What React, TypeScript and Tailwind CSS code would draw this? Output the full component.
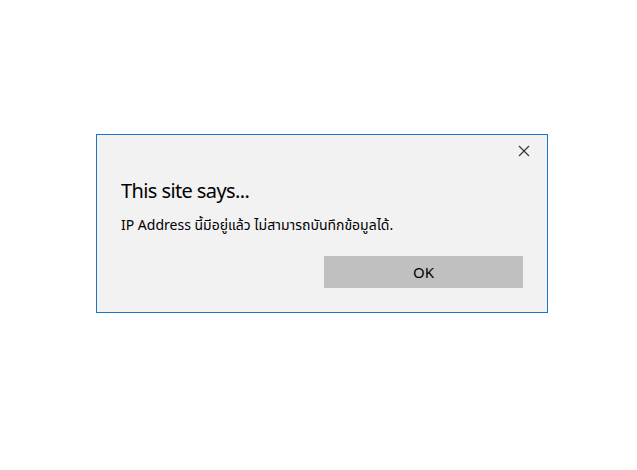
import React from "react";

export default function App() {
  return (
    <div className="w-[637px] h-[470px] bg-white pt-[134px] pl-[96px]" style={{ fontFamily: '"Segoe UI", "Noto Sans", "Noto Sans Thai", "Open Sans", sans-serif' }}>
      <div className="w-[452px] h-[179px] bg-[#f2f2f2] border border-[#1c74c4] flex flex-col">
        <div className="flex justify-end pt-[10px] pr-[17px] h-[42px]">
          <svg width="12" height="12" viewBox="0 0 12 12">
            <path d="M1 1 L11 11 M11 1 L1 11" stroke="#333" strokeWidth="1.1" fill="none" />
          </svg>
        </div>
        <div className="pl-[24px] text-[20px] leading-[28px] tracking-[-0.6px] text-black">This site says...</div>
        <div className="pl-[24px] pt-[10px] text-[14px] leading-[20px] text-black">IP Address นี้มีอยู่แล้ว ไม่สามารถบันทึกข้อมูลได้.</div>
        <div className="flex justify-end pr-[24px] mt-auto pb-[24px]">
          <button className="w-[199px] h-[32px] bg-[#c0c0c0] text-[15px] text-black">OK</button>
        </div>
      </div>
    </div>
  );
}
